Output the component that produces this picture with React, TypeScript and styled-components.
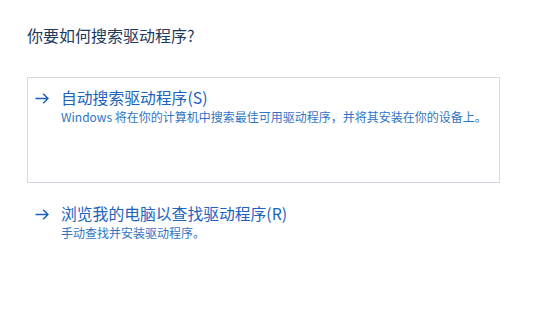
import React from 'react'
import styled, { createGlobalStyle } from 'styled-components'

const GlobalStyle = createGlobalStyle`
  html, body {
    margin: 0;
    padding: 0;
    background: #ffffff;
  }
  body {
    font-family: "Noto Sans CJK SC", "Noto Sans", "Liberation Sans", sans-serif;
  }
`

const Page = styled.div`
  width: 551px;
  height: 313px;
  box-sizing: border-box;
  padding: 25px 0 0 27px;
  background: #ffffff;
  overflow: hidden;
`

const Heading = styled.h1`
  margin: 0;
  font-size: 16px;
  font-weight: 400;
  line-height: 20px;
  color: #1e3a5c;
`

const OptionList = styled.div`
  display: flex;
  flex-direction: column;
  margin-top: 32px;
  width: 473px;
`

const Option = styled.div<{ $boxed?: boolean }>`
  box-sizing: border-box;
  display: grid;
  grid-template-columns: 26px 1fr;
  align-items: start;
  padding: 10px 0 0 7px;
  height: ${(p) => (p.$boxed ? '106px' : 'auto')};
  border: 1px solid ${(p) => (p.$boxed ? '#d2dbe5' : 'transparent')};
  margin-bottom: ${(p) => (p.$boxed ? '10px' : '0')};
  cursor: pointer;
`

const Arrow = styled.svg`
  width: 14px;
  height: 11px;
  margin-top: 5px;
  color: #1a62be;
`

const OptionText = styled.div`
  display: flex;
  flex-direction: column;
  white-space: nowrap;
`

const OptionTitle = styled.div`
  font-size: 15.8px;
  line-height: 20px;
  color: #1c63bd;
`

const OptionDesc = styled.div`
  font-size: 12px;
  line-height: 15px;
  color: #2f74c4;
  margin-top: 1px;
`

const ArrowIcon = () => (
  <Arrow viewBox="0 0 14 11" fill="none">
    <path d="M0.5 5.5h12.5M8.2 0.8L13 5.5l-4.8 4.7" stroke="currentColor" strokeWidth="1.5" />
  </Arrow>
)

const DriverOption: React.FC<{ title: string; desc: string; boxed?: boolean }> = ({ title, desc, boxed }) => (
  <Option $boxed={boxed}>
    <ArrowIcon />
    <OptionText>
      <OptionTitle>{title}</OptionTitle>
      <OptionDesc>{desc}</OptionDesc>
    </OptionText>
  </Option>
)

export default function App() {
  return (
    <Page>
      <GlobalStyle />
      <Heading>你要如何搜索驱动程序?</Heading>
      <OptionList>
        <DriverOption
          boxed
          title="自动搜索驱动程序(S)"
          desc="Windows 将在你的计算机中搜索最佳可用驱动程序，并将其安装在你的设备上。"
        />
        <DriverOption title="浏览我的电脑以查找驱动程序(R)" desc="手动查找并安装驱动程序。" />
      </OptionList>
    </Page>
  )
}
